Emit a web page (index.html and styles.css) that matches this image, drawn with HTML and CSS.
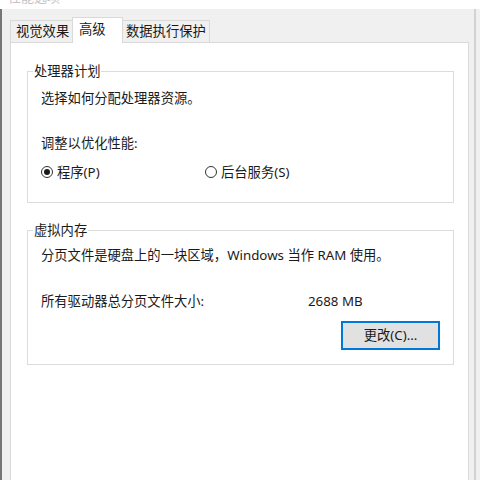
FILE: index.html
```html
<!DOCTYPE html>
<html lang="zh-CN">
<head>
<meta charset="utf-8">
<title>性能选项</title>
<link rel="stylesheet" href="styles.css">
</head>
<body>
<div class="titlebar"><span class="title-text">性能选项</span></div>
<div class="main">
  <div class="dialog">
    <div class="tabs">
      <div class="tab tab-1">视觉效果</div>
      <div class="tab tab-2 selected">高级</div>
      <div class="tab tab-3">数据执行保护</div>
    </div>
    <div class="panel">
      <fieldset class="group group-cpu">
        <legend>处理器计划</legend>
        <p class="line line-first">选择如何分配处理器资源。</p>
        <p class="line line-adjust">调整以优化性能:</p>
        <div class="radios">
          <label class="radio"><span class="dot checked"></span>程序(P)</label>
          <label class="radio"><span class="dot"></span>后台服务(S)</label>
        </div>
      </fieldset>
      <fieldset class="group group-mem">
        <legend>虚拟内存</legend>
        <p class="line line-first-mem">分页文件是硬盘上的一块区域，Windows 当作 RAM 使用。</p>
        <div class="size-row">
          <span>所有驱动器总分页文件大小:</span>
          <span>2688 MB</span>
        </div>
        <div class="btn-row">
          <button class="btn">更改(C)...</button>
        </div>
      </fieldset>
    </div>
  </div>
  <div class="edge-gap"></div>
  <div class="edge-line"></div>
</div>
</body>
</html>
```

FILE: styles.css
```css
html, body {
  margin: 0;
  padding: 0;
  height: 100%;
  overflow: hidden;
}
body {
  background: #f0f0f0;
  font-family: "Noto Sans", "Noto Sans CJK SC", sans-serif;
  font-size: 13.3px;
  color: #1a1a1a;
}
.titlebar {
  height: 9px;
  background: #ffffff;
  overflow: hidden;
}
.title-text {
  display: block;
  margin-top: -12px;
  padding-left: 8px;
  line-height: 18px;
  color: #c4c4c4;
  font-size: 13px;
}
.main {
  display: flex;
  height: 480px;
  border-left: 2px solid #767676;
  box-sizing: border-box;
  padding-left: 8px;
}
.dialog {
  width: 459px;
  display: flex;
  flex-direction: column;
}
.edge-gap {
  width: 5px;
}
.edge-line {
  width: 2px;
  background: #d2d2d2;
}
.tabs {
  display: flex;
  align-items: flex-end;
  padding-top: 8px;
  height: 25px;
}
.tab {
  box-sizing: border-box;
  height: 22px;
  line-height: 21px;
  border: 1px solid #d9d9d9;
  border-bottom: none;
  background: #f0f0f0;
  white-space: nowrap;
}
.tab-1 {
  width: 63px;
  padding-left: 5px;
}
.tab-2 {
  width: 51px;
  padding-left: 6px;
  margin-left: -1px;
}
.tab-3 {
  width: 88px;
  padding-left: 3px;
  margin-left: -1px;
}
.tab.selected {
  height: 26px;
  background: #ffffff;
  margin-bottom: -1px;
  padding-top: 1px;
  position: relative;
  z-index: 1;
  border-color: #d9d9d9;
}
.panel {
  flex: 1;
  background: #ffffff;
  border: 1px solid #d9d9d9;
  padding: 19px 14px 0 16px;
}
.group {
  margin: 0;
  border: 1px solid #dcdcdc;
  padding: 0 13px;
}
.group legend {
  margin-left: -8px;
  padding: 0 1px;
  line-height: 18px;
}
.group-cpu {
  padding-bottom: 21px;
}
.group-mem {
  margin-top: 18px;
  padding-bottom: 14px;
}
.line {
  margin: 0;
  line-height: 18px;
}
.line-first {
  margin-top: 9px;
}
.line-adjust {
  margin-top: 27px;
}
.radios {
  display: grid;
  grid-template-columns: 164px auto;
  margin-top: 11px;
  line-height: 18px;
}
.radio {
  display: flex;
  align-items: center;
}
.dot {
  box-sizing: border-box;
  width: 12px;
  height: 12px;
  border: 1px solid #333333;
  border-radius: 50%;
  margin-right: 4px;
  display: flex;
  align-items: center;
  justify-content: center;
}
.dot.checked::after {
  content: "";
  width: 6px;
  height: 6px;
  border-radius: 50%;
  background: #1a1a1a;
}
.line-first-mem {
  margin-top: 7px;
}
.size-row {
  display: grid;
  grid-template-columns: 267px auto;
  margin-top: 28px;
  line-height: 18px;
}
.btn-row {
  display: flex;
  justify-content: flex-end;
  margin-top: 11px;
}
.btn {
  box-sizing: border-box;
  width: 99px;
  height: 29px;
  border: 2px solid #0078d7;
  background: #e1e1e1;
  font-family: inherit;
  font-size: 13.3px;
  color: #1a1a1a;
  padding: 0;
  line-height: 25px;
}
```
